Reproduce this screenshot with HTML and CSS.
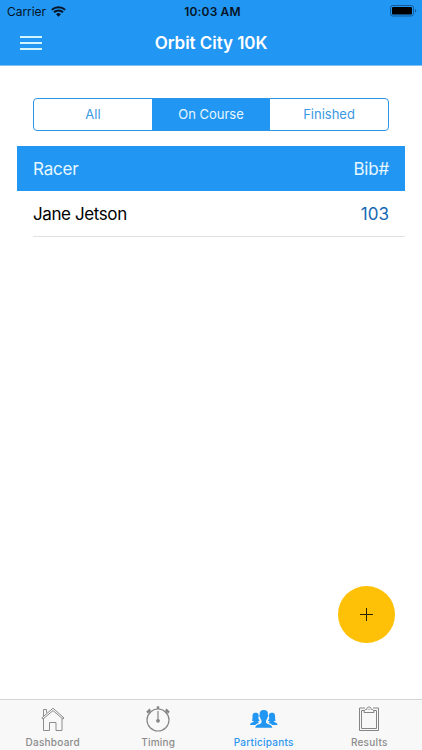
FILE: index.html
```html
<!DOCTYPE html>
<html lang="en">
<head>
    <meta charset="utf-8">
    <meta name="viewport" content="width=device-width, initial-scale=1">
    <title>Orbit City 10K</title>
    <link rel="stylesheet" href="styles.css">
</head>
<body>
<header class="header">
    <div class="status-bar">
        <div class="carrier">
            <span>Carrier</span>
            <svg class="wifi" width="15" height="11" viewBox="0 0 15 11">
                <path d="M.8 3.900a9.500 9.500 0 0 1 13.400 0M3 6.300a6.400 6.400 0 0 1 9 0" fill="none" stroke="#051426" stroke-width="2"/>
                <path d="M7.500 10.700L5.100 8.300a3.400 3.400 0 0 1 4.800 0z" fill="#051426"/>
            </svg>
        </div>
        <span class="time">10:03 AM</span>
        <svg class="battery" width="27" height="12" viewBox="0 0 27 12">
            <rect x=".5" y=".5" width="23" height="10.5" rx="2.3" fill="none" stroke="#135a96"/>
            <rect x="2" y="2" width="20" height="7.5" rx="1" fill="#000"/>
            <path d="M25 4v3.600q1.300-.5 1.300-1.800T25 4z" fill="#135a96"/>
        </svg>
    </div>
    <div class="nav-bar">
        <a class="menu" href="#" aria-label="Menu"><i></i><i></i><i></i></a>
        <h1>Orbit City 10K</h1>
    </div>
</header>

<main class="content">
    <div class="segment">
        <a href="#">All</a>
        <a href="#" class="active">On Course</a>
        <a href="#">Finished</a>
    </div>
    <div class="list">
        <div class="list-header">
            <span>Racer</span>
            <span>Bib#</span>
        </div>
        <div class="list-item">
            <span class="racer">Jane Jetson</span>
            <span class="bib">103</span>
        </div>
    </div>
    <a class="fab" href="#" aria-label="Add">
        <svg width="13" height="13" viewBox="0 0 13 13" fill="none" stroke="#2b2300">
            <path d="M6.5 0v13M0 6.5h13"/>
        </svg>
    </a>
</main>

<nav class="tabs">
    <a class="tab" href="#">
        <svg width="26" height="26" viewBox="0 0 26 26" fill="none" stroke="#8c8c8c">
            <path d="M3.500 12.500v12h6v-8h6.500v8h6v-12"/>
            <path d="M1.800 11.900L13 2.200l11 9.700-1 1.200L13 4.600 2.900 13.100z"/>
            <path d="M3.500 10V3.500h3v3.300"/>
        </svg>
        <span>Dashboard</span>
    </a>
    <a class="tab" href="#">
        <svg width="26" height="26" viewBox="0 0 26 26" fill="none" stroke="#858585">
            <circle cx="13" cy="14" r="11" stroke-width="1.200"/>
            <path d="M13 5v9" stroke-width="1.200"/>
            <circle cx="13" cy="14.800" r="1.900" fill="#858585" stroke="none"/>
            <path d="M13 .3v2.700" stroke-width="2.400"/>
            <path d="M2 6.600l3.200-3.200M24 6.600l-3.200-3.200" stroke-width="2.200"/>
            <path d="M3.600 5l2 2M22.400 5l-2 2" stroke-width="1.400"/>
        </svg>
        <span>Timing</span>
    </a>
    <a class="tab active" href="#">
        <svg width="28" height="26" viewBox="0 0 28 26" fill="#2196f3">
            <path d="M13.800 4C10.600 4 9.300 5.900 9.700 8.800c-.7.400-.3 2.400.5 2.700.3 1.500.8 2.300 1.300 2.800v2.400c-.8 1.700-6 1.400-6.200 5.100h17c-.2-3.700-5.400-3.400-6.200-5.100v-2.400c.5-.5 1-1.300 1.300-2.800.8-.3 1.200-2.300.5-2.700C18.300 5.900 17 4 13.800 4z"/>
            <path id="side" d="M8.500 8.200C8 7.200 7 6.700 5.700 6.700 2.900 6.700 2.500 8.400 2.500 10.500c0 1.500.1 2.900-.6 4.100.5.500 1.300.7 2 .7-.2 1.400-3.700.8-3.800 3.700h5.400c.7-1.100 2-1.700 3.700-2.100-.7-.3-1.100-.7-1.200-1.600.9 0 1.500-.3 1.800-.7-.9-.8-1.400-1.800-1.400-3.200.3-.9.300-2.200.1-3.200z"/>
            <use href="#side" transform="matrix(-1 0 0 1 27.600 0)"/>
        </svg>
        <span>Participants</span>
    </a>
    <a class="tab" href="#">
        <svg width="26" height="26" viewBox="0 0 26 26" fill="none" stroke="#858585">
            <path d="M9 2H3.500v22.500h19V2H17"/>
            <path d="M8 4.500H5.500v18h15v-18H18"/>
            <path d="M8 6.500c0-2.300 1-3.200 2.900-3.200 0-1.500.8-2.300 2.100-2.300s2.100.8 2.100 2.300c1.900 0 2.900.9 2.900 3.200z"/>
            <circle cx="13" cy="3.400" r=".4" stroke-width=".6"/>
        </svg>
        <span>Results</span>
    </a>
</nav>
</body>
</html>
```
FILE: styles.css
```css
*{
    box-sizing: border-box;
}
body{
    display: flex;
    flex-direction: column;
    height: 100vh;
    margin: 0;
    background: #fff;
    font-family: Inter, "Liberation Sans", sans-serif;
    overflow: hidden;
}
a{
    color: inherit;
    text-decoration: none;
}

/* header */
.header{
    height: 66px;
    background: #2196f3;
    border-bottom: 1px solid #82bff2;
}
.status-bar{
    display: grid;
    grid-template-columns: 1fr auto 1fr;
    align-items: center;
    height: 22px;
    padding: 0 5px 0 7px;
    color: #051426;
    font-size: 12px;
}
.carrier{
    display: flex;
    align-items: center;
    gap: 5px;
    letter-spacing: -.05px;
}
.time{
    padding-left: 1px;
    font-weight: 600;
    letter-spacing: .15px;
}
.battery{
    justify-self: end;
}
.nav-bar{
    display: grid;
    grid-template-columns: 1fr auto 1fr;
    align-items: center;
    height: 41px;
    padding: 0 20px;
    color: #fff;
}
.nav-bar h1{
    margin: 0;
    font-size: 17px;
    font-weight: 600;
    letter-spacing: -.05px;
}
.menu{
    display: flex;
    flex-direction: column;
    gap: 4px;
    width: 22px;
}
.menu i{
    height: 2px;
    background: #d3f3fd;
}

/* racer list */
.content{
    position: relative;
    flex: 1;
    padding: 32px 17px 0 16.5px;
}
.segment{
    display: flex;
    height: 33px;
    margin: 0 16px 0 16.5px;
    border: 1px solid #2f93e3;
    border-radius: 4px;
    overflow: hidden;
}
.segment a{
    flex: 1;
    color: #3b98e3;
    font-size: 13px;
    line-height: 30px;
    text-align: center;
}
.segment a.active{
    background: #2196f3;
    color: #e7f7ff;
}
.list{
    margin-top: 15px;
    font-size: 17px;
    letter-spacing: -.2px;
}
.list-header{
    display: flex;
    align-items: center;
    justify-content: space-between;
    height: 45px;
    padding: 0 16px 0 16.5px;
    background: #2196f3;
    color: #e7f7ff;
}
.list-item{
    display: flex;
    align-items: center;
    justify-content: space-between;
    height: 46px;
    margin-left: 16.5px;
    padding-right: 16px;
    border-bottom: 1px solid #e2e2e2;
    color: #000;
}
.racer{
    letter-spacing: -.4px;
}
.bib{
    color: #1469b4;
    letter-spacing: 0;
}
.fab{
    position: absolute;
    right: 27px;
    bottom: 56px;
    display: flex;
    align-items: center;
    justify-content: center;
    width: 57px;
    height: 57px;
    border-radius: 50%;
    background: #ffc107;
}

/* bottom tabs */
.tabs{
    display: flex;
    height: 51px;
    background: #f8f8f8;
    border-top: 1px solid #d5d5d5;
}
.tab{
    display: flex;
    flex: 1;
    flex-direction: column;
    align-items: center;
    padding-top: 6px;
    color: #8c8c8c;
    font-size: 10px;
    font-weight: 500;
    line-height: 12px;
    letter-spacing: .25px;
}
.tab span{
    margin-top: 4px;
}
.tab.active{
    color: #2c96ee;
}
```
